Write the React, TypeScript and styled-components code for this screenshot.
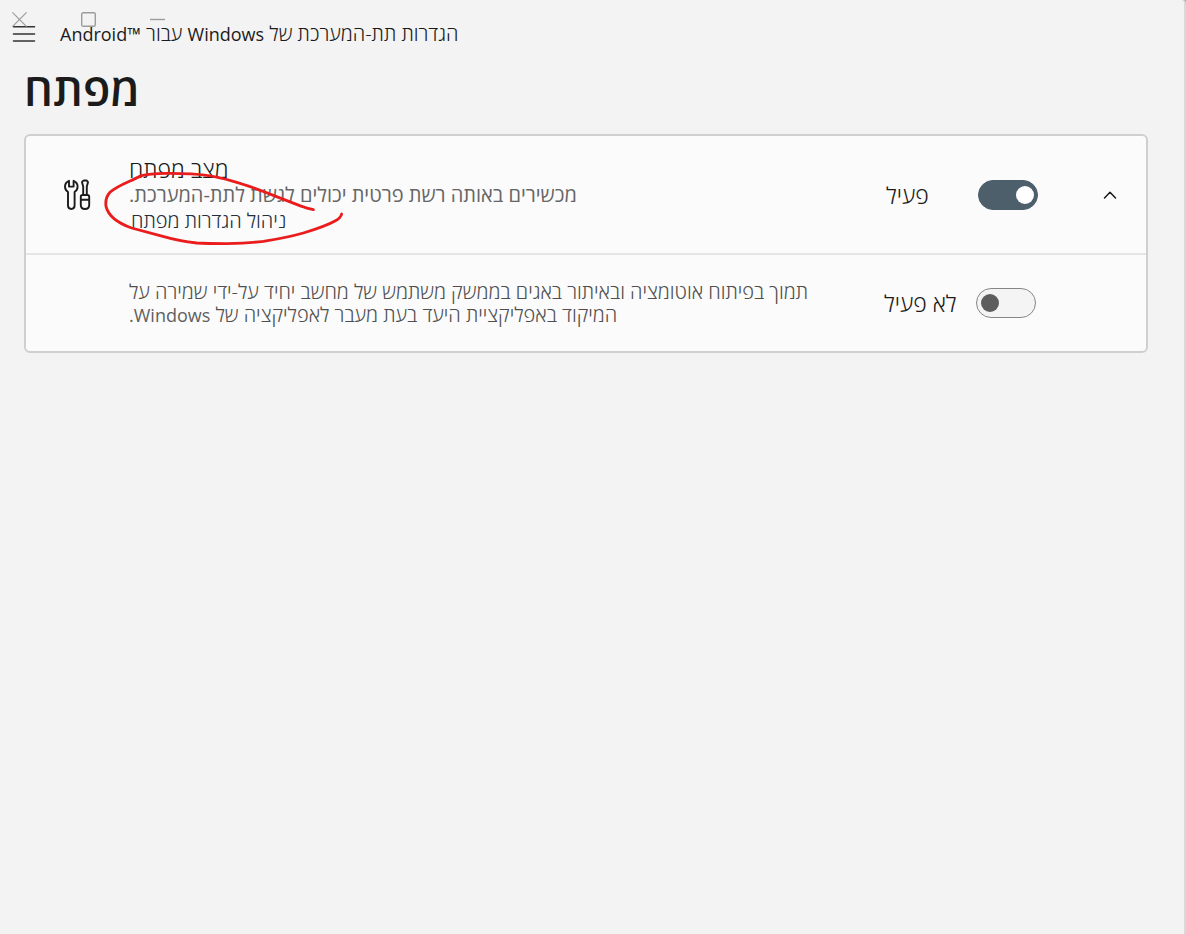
import React from "react";
import styled, { createGlobalStyle } from "styled-components";

const GlobalStyle = createGlobalStyle`
  *, *::before, *::after { box-sizing: border-box; }
  body {
    margin: 0;
    background: #b3abc9;
    color: #1b1b1b;
    font-family: "Open Sans", "Noto Sans", sans-serif;
  }
`;

const Window = styled.div`
  position: relative;
  min-height: 100vh;
  background: #f3f3f3;
  border-right: 2px solid #d9d9d9;
  border-top-right-radius: 4px;
`;

const WindowControls = styled.div`
  position: absolute;
  top: 12px;
  left: 12px;
  display: flex;
  gap: 54px;
`;

const PlainButton = styled.button`
  display: block;
  padding: 0;
  border: 0;
  background: none;
  color: inherit;
  line-height: 0;
  cursor: pointer;
`;

const CaptionButton = styled(PlainButton)`
  color: #9c9c9c;
`;

const TitleBar = styled.header`
  display: flex;
  align-items: center;
  gap: 24px;
  padding: 22px 12px 0;
`;

const AppTitle = styled.span`
  font-size: 20px;
  font-weight: 300;
  line-height: 24px;
`;

const Latin = styled.bdi`
  font-size: 18px;
  font-weight: 400;
  line-height: 1;
`;

const Main = styled.main`
  padding: 11px 36px 24px 24px;
`;

const Heading = styled.h1`
  width: fit-content;
  margin: 0 0 13px;
  font-size: 45px;
  font-weight: 600;
  line-height: 64px;
`;

const Card = styled.section`
  border: 2px solid #cfcfcf;
  border-radius: 6px;
  background: #fbfbfb;
`;

const Row = styled.div<{ $divided?: boolean }>`
  position: relative;
  display: flex;
  align-items: center;
  min-height: ${(p) => (p.$divided ? 119 : 96)}px;
  border-bottom: ${(p) => (p.$divided ? "2px solid #e5e5e5" : "0")};
`;

const IconCell = styled.div`
  display: flex;
  flex: none;
  justify-content: center;
  width: 103px;
`;

const Copy = styled.div`
  flex: 1;
  min-width: 0;
`;

const RowTitle = styled.h2`
  width: fit-content;
  margin: 0;
  font-size: 23px;
  font-weight: 300;
  line-height: 26px;
`;

const Description = styled.p<{ $compact?: boolean }>`
  width: fit-content;
  max-width: 696px;
  margin: 0;
  color: ${(p) => (p.$compact ? "#4f4f4f" : "#666666")};
  font-size: 20px;
  font-weight: ${(p) => (p.$compact ? 300 : 400)};
  line-height: ${(p) => (p.$compact ? 23 : 26)}px;
  text-align: left;

  ${Latin} {
    color: #5f5f5f;
  }
`;

const ManageLink = styled.a`
  display: block;
  width: fit-content;
  padding-left: 2px;
  color: #22303e;
  font-size: 20px;
  font-weight: 300;
  line-height: 26px;
  text-decoration: none;
`;

const ToggleCell = styled.div`
  display: flex;
  flex: none;
  align-items: center;
  justify-content: space-between;
  width: 152px;
`;

const ToggleLabel = styled.label`
  font-size: 23px;
  font-weight: 300;
  line-height: 30px;
`;

const Switch = styled.input`
  appearance: none;
  display: flex;
  align-items: center;
  width: 60px;
  height: 30px;
  margin: 0;
  padding: 0 4px;
  border: 1px solid #868686;
  border-radius: 15px;
  background: #f4f4f4;
  cursor: pointer;

  &::before {
    content: "";
    width: 18px;
    height: 18px;
    border-radius: 50%;
    background: #5d5d5d;
  }

  &:checked {
    justify-content: flex-end;
    padding: 0 3px;
    border-color: #4c5f6b;
    background: #4c5f6b;
  }

  &:checked::before {
    background: #ffffff;
  }
`;

const ExpandCell = styled.div<{ $empty?: boolean }>`
  display: flex;
  flex: none;
  justify-content: flex-end;
  width: ${(p) => (p.$empty ? 110 : 108)}px;
  padding-right: 28px;
`;

const PenMark = styled.svg`
  position: absolute;
  top: 32px;
  left: 74px;
  pointer-events: none;
`;

const ToolsIcon = () => (
  <svg width="28" height="32" viewBox="0 0 28 32" fill="none" stroke="#1b1b1b" strokeWidth="1.9" strokeLinejoin="round" aria-hidden="true">
    <path d="M5 1.8C2.6 2.8 1 5 1 7.5C1 9.9 2.2 11.9 4 13V26.6C4 28.7 5.3 30 7.3 30S10.6 28.7 10.6 26.6V13C12.4 11.9 13.6 9.9 13.6 7.5C13.6 5 12 2.8 9.6 1.8V7.6H5Z" />
    <path d="M19.3 1.5H22.7L24 3.2L22.8 7.5V16M19.3 1.5L18 3.2L19.2 7.5V16" />
    <path d="M16.8 20.5V17.8C16.8 16.8 17.6 16 18.6 16H23.4C24.4 16 25.2 16.8 25.2 17.8V26C25.2 28.4 23.4 30 21 30S16.8 28.4 16.8 26ZM16.8 20.8H25.2" />
  </svg>
);

export default function App() {
  return (
    <Window>
      <GlobalStyle />
      <TitleBar>
        <PlainButton type="button" aria-label="תפריט">
          <svg width="24" height="24" viewBox="0 0 24 24" stroke="#333333" strokeWidth="1.6" strokeLinecap="round">
            <path d="M1.5 4.7H22.5M1.5 12H22.5M1.5 19H22.5" />
          </svg>
        </PlainButton>
        <AppTitle dir="rtl">
          הגדרות תת-המערכת של <Latin dir="ltr">Windows</Latin> עבור <Latin dir="ltr">Android™</Latin>
        </AppTitle>
      </TitleBar>
      <WindowControls>
        <CaptionButton type="button" aria-label="סגור">
          <svg width="15" height="15" viewBox="0 0 15 15" stroke="currentColor" strokeWidth="1.2">
            <path d="M0.4 0.4L14.6 14.6M14.6 0.4L0.4 14.6" />
          </svg>
        </CaptionButton>
        <CaptionButton type="button" aria-label="הגדל">
          <svg width="15" height="15" viewBox="0 0 15 15" fill="none" stroke="currentColor" strokeWidth="1.4">
            <rect x="0.7" y="0.7" width="13.6" height="13.6" rx="1.6" />
          </svg>
        </CaptionButton>
        <CaptionButton type="button" aria-label="מזער">
          <svg width="15" height="15" viewBox="0 0 15 15" stroke="currentColor" strokeWidth="1.4">
            <path d="M0 7.5H15" />
          </svg>
        </CaptionButton>
      </WindowControls>
      <Main>
        <Heading dir="rtl">מפתח</Heading>
        <Card>
          <Row $divided>
            <IconCell>
              <ToolsIcon />
            </IconCell>
            <Copy>
              <RowTitle dir="rtl">מצב מפתח</RowTitle>
              <Description dir="rtl">מכשירים באותה רשת פרטית יכולים לגשת לתת-המערכת.</Description>
              <ManageLink dir="rtl" href="#manage">ניהול הגדרות מפתח</ManageLink>
            </Copy>
            <ToggleCell>
              <ToggleLabel dir="rtl" htmlFor="developer-mode">פעיל</ToggleLabel>
              <Switch id="developer-mode" type="checkbox" role="switch" defaultChecked />
            </ToggleCell>
            <ExpandCell>
              <PlainButton type="button" aria-label="כווץ" aria-expanded="true">
                <svg width="16" height="16" viewBox="0 0 16 16" fill="none" stroke="#1b1b1b" strokeWidth="1.5" strokeLinecap="round" strokeLinejoin="round">
                  <path d="M2.5 11L8 5.2L13.5 11" />
                </svg>
              </PlainButton>
            </ExpandCell>
            <PenMark width="250" height="82" viewBox="240 120 750 246" fill="none" stroke="#ea1c1c" strokeWidth="8.5" strokeLinecap="round" strokeLinejoin="round" aria-hidden="true">
              <path d="M880 245C868 243 856 240 845 235L760 202C715 184 680 171 640 160C610 151 585 145 560 142C520 136 485 136 450 136C415 137 388 137 365 143C352 148 342 154 330 159C305 170 286 178 270 193C258 206 256 220 258 235C264 260 290 284 335 300L420 323C455 333 490 341 530 345C560 347 590 347 620 347C660 346 690 345 730 340C775 333 815 325 850 315C890 303 920 293 945 279C960 271 963 266 965 258" />
            </PenMark>
          </Row>
          <Row>
            <IconCell />
            <Copy>
              <Description dir="rtl" $compact>
                תמוך בפיתוח אוטומציה ובאיתור באגים בממשק משתמש של מחשב יחיד על-ידי שמירה על
                המיקוד באפליקציית היעד בעת מעבר לאפליקציה של <Latin dir="rtl">Windows.</Latin>
              </Description>
            </Copy>
            <ToggleCell>
              <ToggleLabel dir="rtl" htmlFor="keep-focus">לא פעיל</ToggleLabel>
              <Switch id="keep-focus" type="checkbox" role="switch" />
            </ToggleCell>
            <ExpandCell $empty />
          </Row>
        </Card>
      </Main>
    </Window>
  );
}
